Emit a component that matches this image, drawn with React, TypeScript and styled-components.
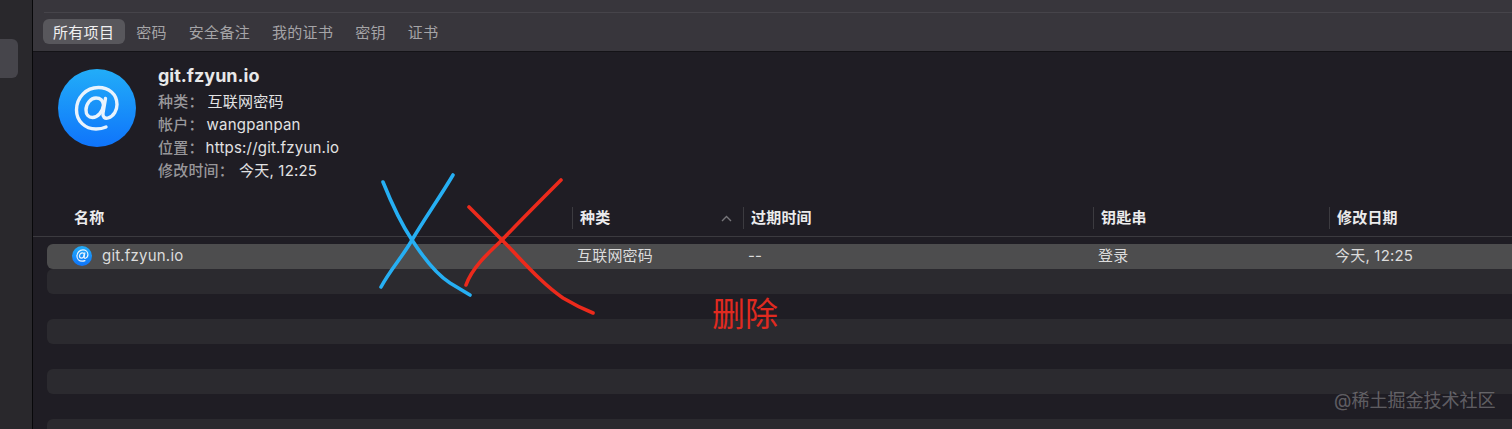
import React from "react";
import styled, { createGlobalStyle } from "styled-components";

const FONT = `Inter, "Noto Sans CJK SC", sans-serif`;

const GlobalStyle = createGlobalStyle`
  html, body {
    margin: 0;
    padding: 0;
    background: #1f1d24;
  }
  body {
    font-family: ${FONT};
    -webkit-font-smoothing: antialiased;
  }
`;

const Window = styled.div`
  position: relative;
  display: flex;
  width: 1512px;
  height: 429px;
  overflow: hidden;
  background: #1f1d24;
`;

const Sidebar = styled.aside`
  flex: none;
  box-sizing: border-box;
  width: 33px;
  padding-top: 39px;
  background: #29282c;
  border-right: 1px solid #08080a;
`;

const SidebarItem = styled.div`
  width: 18px;
  height: 39px;
  background: #46454b;
  border-radius: 0 6px 6px 0;
`;

const Main = styled.main`
  flex: 1;
  min-width: 0;
  display: flex;
  flex-direction: column;
`;

const Toolbar = styled.div`
  flex: none;
  box-sizing: border-box;
  height: 52px;
  padding: 12px 0 0 10px;
  background: #38363c;
  border-bottom: 1px solid #141317;
`;

const ToolbarRule = styled.div`
  height: 1px;
  margin: 0 0 6px 1px;
  background: #46444a;
`;

const Tabs = styled.div`
  display: flex;
  align-items: center;
  gap: 1px;
`;

const Tab = styled.div<{ $active?: boolean }>`
  height: 25px;
  padding: 0 11px 0 10px;
  display: flex;
  align-items: center;
  border-radius: 6px;
  font-size: 15px;
  letter-spacing: 0.3px;
  color: ${({ $active }) => ($active ? "#f0f0f1" : "#a5a4a7")};
  background: ${({ $active }) => ($active ? "#58575c" : "transparent")};
`;

const Detail = styled.section`
  flex: none;
  display: flex;
  height: 148px;
  padding-left: 25px;
`;

const AppIcon = styled.div`
  flex: none;
  width: 78px;
  height: 78px;
  margin-top: 17px;
  display: flex;
  align-items: center;
  justify-content: center;
  border-radius: 50%;
  background: linear-gradient(#22adf8, #0f74fb);
`;

const Info = styled.div`
  margin-left: 22px;
  padding-top: 12px;
`;

const Title = styled.div`
  height: 26px;
  line-height: 24px;
  font-size: 18px;
  font-weight: 700;
  color: #e8e8e9;
`;

const InfoRow = styled.div`
  display: flex;
  height: 23px;
  line-height: 23px;
  font-size: 15px;
  letter-spacing: 0.2px;
  white-space: pre;
`;

const InfoLabel = styled.span`
  font-weight: 500;
  color: #98979a;
`;

const InfoValue = styled.span<{ $gap: number }>`
  margin-left: ${({ $gap }) => $gap}px;
  color: #e2e2e3;
`;

const Table = styled.section`
  flex: 1;
  min-height: 0;
  display: flex;
  flex-direction: column;
`;

const HeaderRow = styled.div`
  flex: none;
  display: flex;
  box-sizing: border-box;
  height: 37px;
  border-bottom: 1px solid #3b3a3f;
`;

const HeaderCell = styled.div<{ $width: number; $divider?: boolean }>`
  position: relative;
  flex: none;
  width: ${({ $width }) => $width}px;
  box-sizing: border-box;
  padding-left: ${({ $divider }) => ($divider ? "8px" : "41px")};
  height: 36px;
  line-height: 36px;
  font-size: 15px;
  letter-spacing: 0.2px;
  font-weight: 600;
  color: #ebebec;
  display: flex;
  align-items: center;
  justify-content: space-between;

  &::before {
    content: "";
    display: ${({ $divider }) => ($divider ? "block" : "none")};
    position: absolute;
    left: 0;
    top: 7px;
    width: 1px;
    height: 22px;
    background: #3c3b40;
  }
`;

const SortArrow = styled.svg`
  flex: none;
  margin-right: 11px;
`;

const Rows = styled.div`
  display: flex;
  flex-direction: column;
  padding: 7px 0 0 14px;
`;

const Row = styled.div<{ $tone: "selected" | "stripe" | "plain" }>`
  flex: none;
  box-sizing: border-box;
  display: flex;
  align-items: center;
  height: 25px;
  padding-bottom: 2px;
  border-radius: 6px 0 0 6px;
  font-size: 15px;
  letter-spacing: 0.2px;
  line-height: 22px;
  color: #dcdcdc;
  background: ${({ $tone }) =>
    $tone === "selected" ? "#4d4d4e" : $tone === "stripe" ? "#2b2a2f" : "transparent"};
`;

const RowCell = styled.div<{ $width: number }>`
  flex: none;
  width: ${({ $width }) => $width}px;
  box-sizing: border-box;
  display: flex;
  align-items: center;
`;

const NameCell = styled(RowCell)`
  padding-left: 25px;
  gap: 10px;
`;

const SmallIcon = styled.div`
  width: 20px;
  height: 20px;
  display: flex;
  align-items: center;
  justify-content: center;
  border-radius: 50%;
  background: linear-gradient(#22adf8, #0f74fb);
`;

const Annotation = styled.svg`
  position: absolute;
  left: 0;
  top: 0;
  pointer-events: none;
`;

const DeleteNote = styled.div`
  position: absolute;
  left: 712px;
  top: 293px;
  font-family: "Noto Sans CJK SC", sans-serif;
  font-size: 33px;
  font-weight: 400;
  line-height: 38px;
  color: #e02a20;
`;

const Watermark = styled.div`
  position: absolute;
  left: 1334px;
  top: 389px;
  font-size: 18px;
  line-height: 24px;
  color: rgba(255, 255, 255, 0.3);
`;

const AtGlyph = ({ size, stroke }: { size: number; stroke: number }) => (
  <svg width={size} height={size} viewBox="0 0 48 48" fill="none" stroke="#e9f3fd" strokeWidth={stroke} strokeLinecap="round">
    <path d="M32.5 14.5 L30 29 C29.4 33 32 35 35 34 C41 32 44 26 44 20.5 C44 10 35.5 3.5 25.5 3.5 C13 3.5 3.5 13.5 3.5 26 C3.5 37 12 45 23 45 C27 45 30 44.4 33 43" />
    <path d="M30.5 21 C30 16.5 27 14 23 14 C17.5 14 13 20 13 26 C13 30.5 15.5 33.5 19.5 33.5 C25 33.5 29.8 27.5 30.5 21 Z" />
  </svg>
);

const tabs = ["密码", "安全备注", "我的证书", "密钥", "证书"];

const info = [
  { label: "种类：", value: "互联网密码", gap: 4 },
  { label: "帐户：", value: "wangpanpan", gap: 3 },
  { label: "位置：", value: "https://git.fzyun.io", gap: 2 },
  { label: "修改时间：", value: "今天, 12:25", gap: 5 },
];

const emptyRows: Array<"stripe" | "plain"> = ["stripe", "plain", "stripe", "plain", "stripe", "plain", "stripe"];

export default function App() {
  return (
    <Window>
      <GlobalStyle />
      <Sidebar>
        <SidebarItem />
      </Sidebar>
      <Main>
        <Toolbar>
          <ToolbarRule />
          <Tabs>
            <Tab $active>所有项目</Tab>
            {tabs.map((t) => (
              <Tab key={t}>{t}</Tab>
            ))}
          </Tabs>
        </Toolbar>
        <Detail>
          <AppIcon>
            <AtGlyph size={48} stroke={3.4} />
          </AppIcon>
          <Info>
            <Title>git.fzyun.io</Title>
            {info.map((i) => (
              <InfoRow key={i.label}>
                <InfoLabel>{i.label}</InfoLabel>
                <InfoValue $gap={i.gap}>{i.value}</InfoValue>
              </InfoRow>
            ))}
          </Info>
        </Detail>
        <Table>
          <HeaderRow>
            <HeaderCell $width={539}>名称</HeaderCell>
            <HeaderCell $width={171} $divider>
              种类
              <SortArrow width="11" height="7" viewBox="0 0 11 7" fill="none" stroke="#77767a" strokeWidth="1.4">
                <path d="M1 6 L5.5 1.5 L10 6" />
              </SortArrow>
            </HeaderCell>
            <HeaderCell $width={350} $divider>过期时间</HeaderCell>
            <HeaderCell $width={236} $divider>钥匙串</HeaderCell>
            <HeaderCell $width={183} $divider>修改日期</HeaderCell>
          </HeaderRow>
          <Rows>
            <Row $tone="selected">
              <NameCell $width={530}>
                <SmallIcon>
                  <AtGlyph size={13} stroke={4.5} />
                </SmallIcon>
                git.fzyun.io
              </NameCell>
              <RowCell $width={171}>互联网密码</RowCell>
              <RowCell $width={350}>--</RowCell>
              <RowCell $width={237}>登录</RowCell>
              <RowCell $width={177}>今天, 12:25</RowCell>
            </Row>
            {emptyRows.map((tone, i) => (
              <Row key={i} $tone={tone} />
            ))}
          </Rows>
        </Table>
      </Main>
      <Annotation width="1512" height="429" viewBox="0 0 1512 429" fill="none" strokeWidth="3.6" strokeLinecap="round" strokeLinejoin="round">
        <path stroke="#26aff3" d="M453 175 C440 197 425 218 412 240 C403 256 390 270 381 287" />
        <path stroke="#26aff3" d="M383 182 C391 202 400 222 412 240 C423 257 436 274 450 283 Q460 289 470 295" />
        <path stroke="#ec2a1c" d="M561 180 C541 200 521 220 502 240 C487 254 472 268 466 285" />
        <path stroke="#ec2a1c" d="M469 207 L502 240 C522 260 541 283 563 298 C573 304 583 309 593 313" />
      </Annotation>
      <DeleteNote>删除</DeleteNote>
      <Watermark>@稀土掘金技术社区</Watermark>
    </Window>
  );
}
